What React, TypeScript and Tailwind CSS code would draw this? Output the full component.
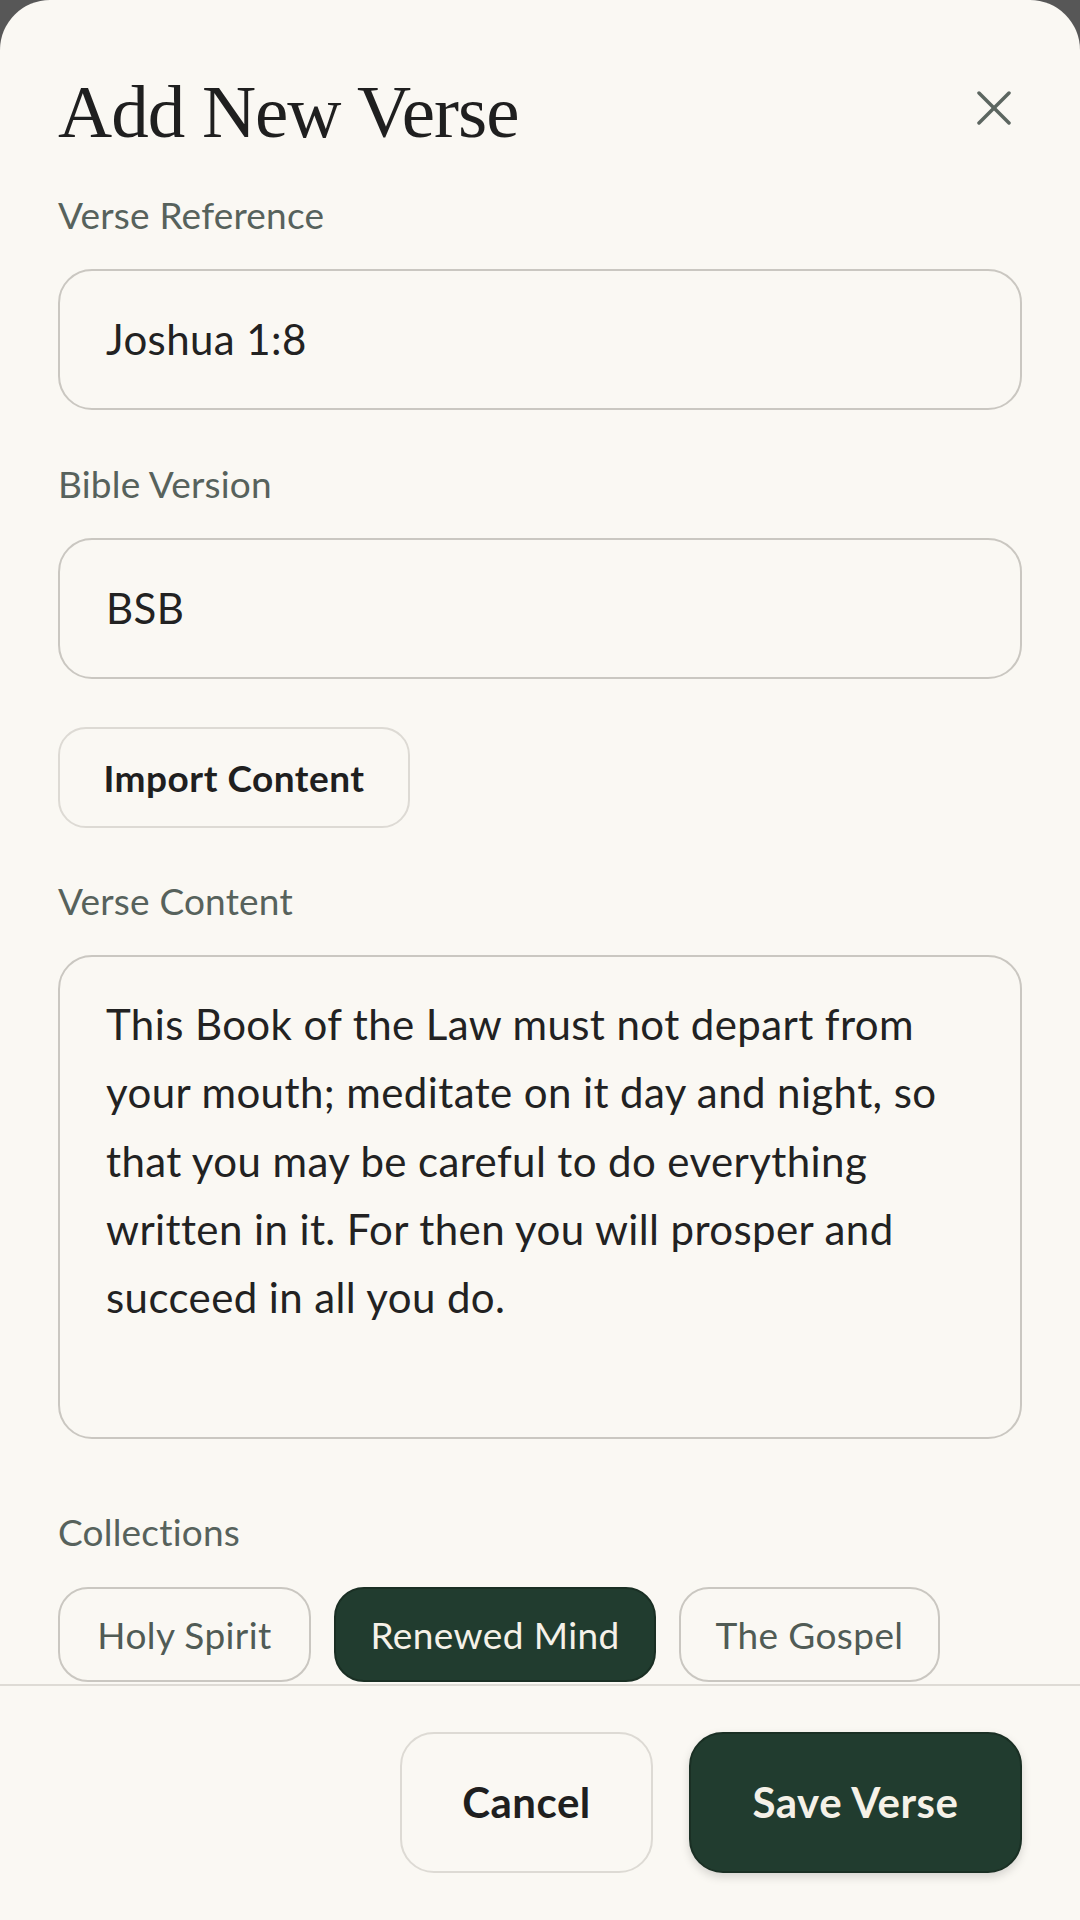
import React from 'react'

const verseLines = [
  'This Book of the Law must not depart from',
  'your mouth; meditate on it day and night, so',
  'that you may be careful to do everything',
  'written in it. For then you will prosper and',
  'succeed in all you do.',
]

const collections = [
  { name: 'Holy Spirit', width: 'w-[253px]', active: false },
  { name: 'Renewed Mind', width: 'w-[322px]', active: true },
  { name: 'The Gospel', width: 'w-[261px]', active: false },
]

function CloseIcon() {
  return (
    <svg width="34" height="34" viewBox="0 0 34 34" fill="none" stroke="#5c6660" strokeWidth="3.5" strokeLinecap="round">
      <path d="M2 2 32 32" />
      <path d="M32 2 2 32" />
    </svg>
  )
}

function Label({ children, className = '' }: { children: React.ReactNode; className?: string }) {
  return <div className={`text-[37px] leading-[44px] tracking-[0.2px] text-[#57625c] ${className}`}>{children}</div>
}

export default function App() {
  return (
    <div className="min-h-[1920px] bg-[#575757] font-['Lato',sans-serif]">
      <div className="h-[1920px] rounded-t-[50px] bg-[#faf8f3] flex flex-col">
        {/* Scrollable form body */}
        <div className="flex-1 overflow-hidden px-[58px]">
          <div className="flex items-start justify-between pt-[67px]">
            <h1 className="font-['Liberation_Serif',serif] text-[75px] leading-[90px] tracking-[-1px] text-[#1f1f1f]">
              Add New Verse
            </h1>
            <button className="mt-[24px] mr-[11px]">
              <CloseIcon />
            </button>
          </div>

          <Label className="mt-[36px]">Verse Reference</Label>
          <div className="mt-[32px] h-[141px] rounded-[34px] border-2 border-[#cac7c1] px-[46px] flex items-center text-[42px] tracking-[0.4px] text-[#222222]">
            Joshua 1:8
          </div>

          <Label className="mt-[52px]">Bible Version</Label>
          <div className="mt-[32px] h-[141px] rounded-[34px] border-2 border-[#cac7c1] px-[46px] flex items-center text-[42px] tracking-[0.4px] text-[#222222]">
            BSB
          </div>

          <button className="mt-[48px] w-[352px] h-[101px] rounded-[28px] border-2 border-[#dddad4] flex items-center justify-center text-[37px] tracking-[0.5px] font-bold text-[#1f1f1f]">
            Import Content
          </button>

          <Label className="mt-[51px]">Verse Content</Label>
          <div className="mt-[32px] h-[484px] rounded-[34px] border-2 border-[#cac7c1] px-[46px] pt-[33px] text-[42px] leading-[68.3px] tracking-[0.4px] text-[#222222]">
            {verseLines.map((line, i) => (
              <div key={i} className="whitespace-nowrap">{line}</div>
            ))}
          </div>

          <Label className="mt-[71px]">Collections</Label>
          <div className="mt-[33px] flex gap-[23px]">
            {collections.map((c) => (
              <div
                key={c.name}
                className={`${c.width} h-[95px] rounded-[30px] border-2 flex items-center justify-center text-[37px] tracking-[0.4px] ${
                  c.active ? 'bg-[#213c2f] border-[#1a2f24] text-[#f5f1e8]' : 'border-[#cac7c1] text-[#505b55]'
                }`}
              >
                {c.name}
              </div>
            ))}
          </div>
        </div>

        {/* Footer actions */}
        <div className="h-[236px] border-t-2 border-[#dedbd5] px-[58px] pt-[46px] flex justify-end gap-[36px]">
          <button className="w-[253px] h-[141px] rounded-[34px] border-2 border-[#dddad4] text-[42px] tracking-[0.5px] font-bold text-[#1f1f1f]">
            Cancel
          </button>
          <button className="w-[333px] h-[141px] rounded-[34px] border-2 border-[#1a2f24] bg-[#213c2f] text-[42px] tracking-[0.5px] font-bold text-[#f5f1e8] shadow-[0_4px_10px_rgba(0,0,0,0.15)]">
            Save Verse
          </button>
        </div>
      </div>
    </div>
  )
}
